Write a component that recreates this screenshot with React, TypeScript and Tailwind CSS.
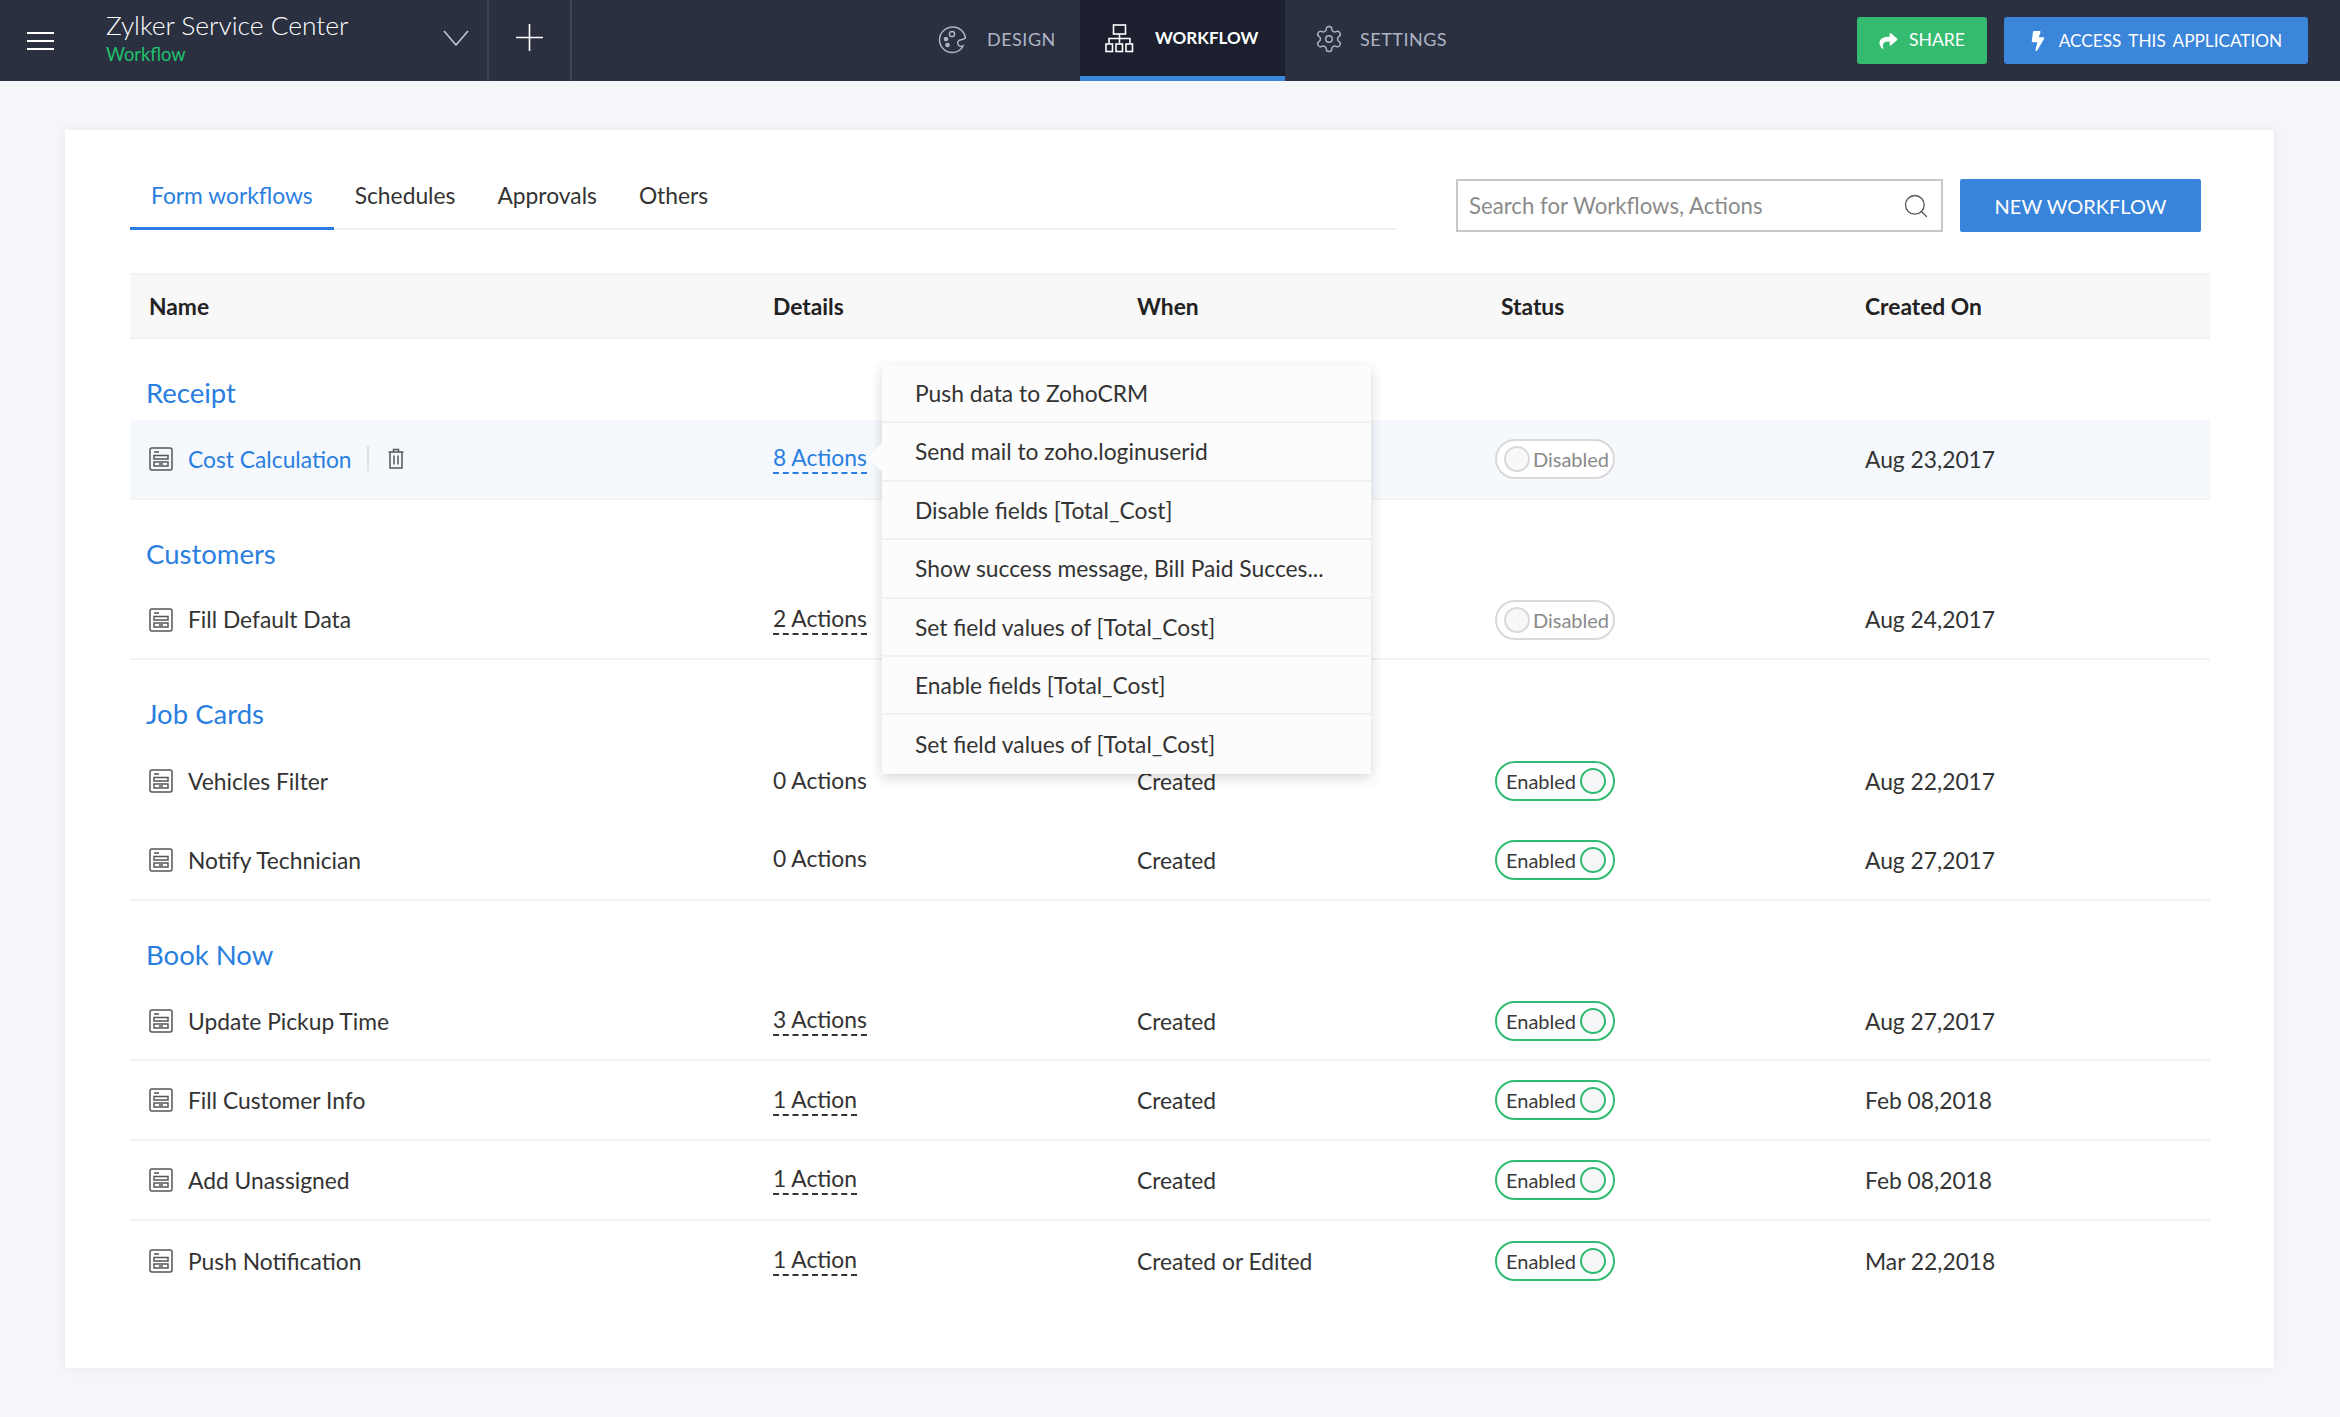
import { Search } from "lucide-react";
import { FaShare, FaBolt } from "react-icons/fa";

interface Row {
  name: string;
  actions: string;
  when: string;
  enabled: boolean;
  date: string;
  underlined?: boolean;
  active?: boolean;
}

const groups: { title: string; rows: Row[] }[] = [
  {
    title: "Receipt",
    rows: [
      { name: "Cost Calculation", actions: "8 Actions", when: "", enabled: false, date: "Aug 23,2017", underlined: true, active: true },
    ],
  },
  {
    title: "Customers",
    rows: [{ name: "Fill Default Data", actions: "2 Actions", when: "", enabled: false, date: "Aug 24,2017", underlined: true }],
  },
  {
    title: "Job Cards",
    rows: [
      { name: "Vehicles Filter", actions: "0 Actions", when: "Created", enabled: true, date: "Aug 22,2017" },
      { name: "Notify Technician", actions: "0 Actions", when: "Created", enabled: true, date: "Aug 27,2017" },
    ],
  },
  {
    title: "Book Now",
    rows: [
      { name: "Update Pickup Time", actions: "3 Actions", when: "Created", enabled: true, date: "Aug 27,2017", underlined: true },
      { name: "Fill Customer Info", actions: "1 Action", when: "Created", enabled: true, date: "Feb 08,2018", underlined: true },
      { name: "Add Unassigned", actions: "1 Action", when: "Created", enabled: true, date: "Feb 08,2018", underlined: true },
      { name: "Push Notification", actions: "1 Action", when: "Created or Edited", enabled: true, date: "Mar 22,2018", underlined: true },
    ],
  },
];

const popoverItems = [
  "Push data to ZohoCRM",
  "Send mail to zoho.loginuserid",
  "Disable fields [Total_Cost]",
  "Show success message, Bill Paid Succes...",
  "Set field values of [Total_Cost]",
  "Enable fields [Total_Cost]",
  "Set field values of [Total_Cost]",
];

function FormIcon() {
  return (
    <svg width="24" height="24" viewBox="0 0 24 24" fill="none" stroke="#555" strokeWidth="1.5" className="shrink-0">
      <rect x="1" y="1" width="22" height="22" rx="2" />
      <path d="M5 5h5" />
      <rect x="5" y="8.5" width="14" height="3.5" />
      <rect x="5" y="15" width="14" height="4" />
      <path d="M10 17h4" />
    </svg>
  );
}

function TrashIcon() {
  return (
    <svg width="16" height="21" viewBox="0 0 16 21" fill="none" stroke="#555" strokeWidth="1.5">
      <path d="M0.5 4h15M5.5 4V1.5h5V4" />
      <path d="M2 4v16h12V4" />
      <path d="M6 7.5v9M10 7.5v9" />
    </svg>
  );
}

function PaletteIcon() {
  return (
    <svg width="29" height="29" viewBox="0 0 29 29" fill="none" stroke="#aeb4c4" strokeWidth="1.5">
      <path d="M15 2C7.5 2 1.5 7.8 1.5 14.8 1.5 21.8 7.2 27.5 14 27.5c4.2 0 9-2.2 11-6.5-1.2.6-3.4.4-4.6-1-1.4-1.6-.6-3.6.6-4.6 1.8-1.4 5-.6 6.4-2.4C26.8 7 21.6 2 15 2Z" />
      <circle cx="14" cy="9" r="2.6" />
      <circle cx="8" cy="14" r="1.6" fill="#aeb4c4" />
      <circle cx="9.5" cy="20" r="1.6" fill="#aeb4c4" />
    </svg>
  );
}

function SitemapIcon() {
  return (
    <svg width="29" height="29" viewBox="0 0 29 29" fill="none" stroke="#fff" strokeWidth="1.6">
      <rect x="8.5" y="1" width="12" height="9" />
      <path d="M14.5 10v9M4 19v-4.5h21V19" />
      <rect x="1" y="20" width="6.5" height="7.5" />
      <rect x="11" y="20" width="6.5" height="7.5" />
      <rect x="21" y="20" width="6.5" height="7.5" />
    </svg>
  );
}

function GearIcon() {
  return (
    <svg width="30" height="30" viewBox="0 0 24 24" fill="none" stroke="#aeb4c4" strokeWidth="1.15" strokeLinejoin="round">
      <path d="M12.22 2h-.44a2 2 0 0 0-2 2v.18a2 2 0 0 1-1 1.73l-.43.25a2 2 0 0 1-2 0l-.15-.08a2 2 0 0 0-2.73.73l-.22.38a2 2 0 0 0 .73 2.73l.15.1a2 2 0 0 1 1 1.72v.51a2 2 0 0 1-1 1.74l-.15.09a2 2 0 0 0-.73 2.73l.22.38a2 2 0 0 0 2.73.73l.15-.08a2 2 0 0 1 2 0l.43.25a2 2 0 0 1 1 1.73V20a2 2 0 0 0 2 2h.44a2 2 0 0 0 2-2v-.18a2 2 0 0 1 1-1.73l.43-.25a2 2 0 0 1 2 0l.15.08a2 2 0 0 0 2.73-.73l.22-.39a2 2 0 0 0-.73-2.73l-.15-.08a2 2 0 0 1-1-1.74v-.5a2 2 0 0 1 1-1.74l.15-.09a2 2 0 0 0 .73-2.73l-.22-.38a2 2 0 0 0-2.73-.73l-.15.08a2 2 0 0 1-2 0l-.43-.25a2 2 0 0 1-1-1.73V4a2 2 0 0 0-2-2z" />
      <circle cx="12" cy="12" r="2.6" />
    </svg>
  );
}

function Toggle({ enabled }: { enabled: boolean }) {
  if (enabled) {
    return (
      <div className="-ml-[6px] flex h-[40px] w-[120px] items-center justify-between rounded-full border-2 border-[#2fbb72] pr-[7px] pl-[9px] text-[20px] text-[#3a3a3a]">
        <span>Enabled</span>
        <span className="h-[26px] w-[26px] rounded-full border-2 border-[#2fbb72] bg-[#f6f6f6]" />
      </div>
    );
  }
  return (
    <div className="-ml-[6px] flex h-[40px] w-[120px] items-center justify-between rounded-full border-2 border-[#d9d9d9] bg-white pr-[4px] pl-[7px] text-[20px] text-[#8a8a8a]">
      <span className="h-[26px] w-[26px] rounded-full border-2 border-[#d9d9d9] bg-[#f8f8f8]" />
      <span>Disabled</span>
    </div>
  );
}

function TableRow({ row, divider }: { row: Row; divider: boolean }) {
  return (
    <div
      className={`grid h-[79.7px] grid-cols-[643px_364px_364px_364px_1fr] items-center ${
        divider ? "border-b-2 border-[#f3f3f3]" : ""
      } ${row.active ? "bg-[#f5f9fe]" : ""}`}
    >
      <div className="flex items-center gap-[15px] pl-[19px]">
        <FormIcon />
        <span className={row.active ? "text-[#2a7ee0]" : ""}>{row.name}</span>
        {row.active && (
          <div className="flex items-center gap-[19px]">
            <span className="h-[25px] w-[2px] bg-[#dfe3e8]" />
            <TrashIcon />
          </div>
        )}
      </div>
      <div className="-mt-[3px]">
        <span
          className={
            row.underlined
              ? `border-b-2 border-dashed pb-[1px] ${row.active ? "border-[#2a7ee0] text-[#2a7ee0]" : "border-[#333]"}`
              : ""
          }
        >
          {row.actions}
        </span>
      </div>
      <div>{row.when}</div>
      <div>
        <Toggle enabled={row.enabled} />
      </div>
      <div>{row.date}</div>
    </div>
  );
}

export default function App() {
  return (
    <div className="h-[1417px] w-[2340px] overflow-hidden bg-[#f5f6fa] font-['Lato',sans-serif] text-[22.8px] text-[#333]">
      {/* Top bar */}
      <header className="flex h-[81px] items-stretch bg-[#2a3040] text-white">
        <div className="flex w-[106px] items-center pl-[27px]">
          <div className="flex w-[27px] flex-col gap-[6px]">
            <span className="h-[2px] bg-white" />
            <span className="h-[2px] bg-white" />
            <span className="h-[2px] bg-white" />
          </div>
        </div>
        <div className="flex w-[383px] items-center justify-between border-r-2 border-[#3d4454] pr-[18px] pb-[6px]">
          <div className="flex flex-col">
            <span className="text-[26.4px] leading-[32px] font-light">Zylker Service Center</span>
            <span className="text-[18.3px] leading-[26px] text-[#1fc26d]">Workflow</span>
          </div>
          <svg width="26" height="16" viewBox="0 0 26 16" fill="none" stroke="#c5c8d0" strokeWidth="1.6">
            <path d="M1 1l12 14L25 1" />
          </svg>
        </div>
        <div className="flex w-[83px] items-center justify-center border-r-2 border-[#3d4454] pb-[6px]">
          <svg width="27" height="27" viewBox="0 0 27 27" fill="none" stroke="#fff" strokeWidth="1.6">
            <path d="M13.5 0v27M0 13.5h27" />
          </svg>
        </div>
        <nav className="ml-[366px] flex items-stretch pb-0 text-[18px] tracking-[0.5px]">
          <div className="flex w-[142px] items-center gap-[20px] pb-[3px] text-[#aeb4c4]">
            <PaletteIcon />
            <span>DESIGN</span>
          </div>
          <div className="flex w-[205px] items-center gap-[21px] border-b-[5px] border-[#3a86dc] bg-[#1b1f2e] pl-[25px] text-[17px] font-bold tracking-normal">
            <SitemapIcon />
            <span>WORKFLOW</span>
          </div>
          <div className="ml-[29px] flex items-center gap-[16px] pb-[3px] text-[#aeb4c4]">
            <GearIcon />
            <span>SETTINGS</span>
          </div>
        </nav>
        <div className="mr-[32px] ml-auto flex items-center gap-[17px] text-[17.6px]">
          <button className="flex h-[47px] w-[130px] items-center justify-center gap-[11px] rounded-[3px] bg-[#35bb70]">
            <FaShare className="h-[18px] w-[19px]" />
            <span>SHARE</span>
          </button>
          <button className="flex h-[47px] w-[304px] items-center justify-center gap-[13px] rounded-[3px] bg-[#3b85da]">
            <FaBolt className="h-[20px] w-[16px]" />
            <span className="text-[17.2px] [word-spacing:3px]">ACCESS THIS APPLICATION</span>
          </button>
        </div>
      </header>

      {/* Card */}
      <main className="mt-[49px] mr-[66px] ml-[65px] h-[1238px] bg-white pt-[49px] pr-[64px] pl-[65px] shadow-[0_0_12px_rgba(0,0,0,0.05)]">
        <div className="flex items-start pr-[9px]">
          <div className="flex h-[51px] w-[1267px] items-stretch border-b-2 border-[#eeeff1]">
            <div className="-mb-[2px] border-b-[3px] border-[#2a7ee0] px-[21px] leading-[33px] text-[#2a7ee0]">Form workflows</div>
            <div className="px-[21px] leading-[33px]">Schedules</div>
            <div className="px-[21px] leading-[33px]">Approvals</div>
            <div className="px-[21px] leading-[33px]">Others</div>
          </div>
          <div className="ml-[59px] flex h-[53px] w-[487px] items-center justify-between border-2 border-[#c8c8cc] pr-[11px] pl-[11px] text-[22.2px] text-[#8b8b8b]">
            <span>Search for Workflows, Actions</span>
            <Search className="h-[28px] w-[28px] text-[#555]" strokeWidth={1.1} />
          </div>
          <button className="ml-[17px] h-[53px] w-[241px] rounded-[2px] bg-[#3984db] text-[20px] text-white">NEW WORKFLOW</button>
        </div>

        {/* Table */}
        <div className="relative mt-[41px]">
          <div className="grid h-[66px] grid-cols-[643px_364px_364px_364px_1fr] items-center border-y-2 border-[#f2f2f2] bg-[#f8f8f8] font-bold text-[#222]">
            <div className="pl-[19px]">Name</div>
            <div>Details</div>
            <div>When</div>
            <div>Status</div>
            <div>Created On</div>
          </div>

          {groups.map((group, g) => (
            <section key={group.title}>
              <div className="flex h-[81px] items-center pt-[26px] pl-[16px] text-[27.5px] text-[#2a7ee0]">{group.title}</div>
              {group.rows.map((row, i) => (
                <TableRow
                  key={row.name}
                  row={row}
                  divider={g < groups.length - 1 ? i === group.rows.length - 1 : i < group.rows.length - 1}
                />
              ))}
            </section>
          ))}

          {/* Actions popover */}
          <div className="absolute top-[92px] left-[752px] w-[489px] bg-[#fcfcfc] shadow-[0_4px_12px_rgba(0,0,0,0.16)]">
            <span className="absolute top-[82px] -left-[10px] h-[20px] w-[20px] rotate-45 bg-[#fcfcfc]" />
            {popoverItems.map((item, i) => (
              <div
                key={i}
                className={`relative flex h-[58.4px] items-center pl-[33px] whitespace-nowrap ${
                  i < popoverItems.length - 1 ? "border-b-2 border-[#f0f0f0]" : ""
                }`}
              >
                {item}
              </div>
            ))}
          </div>
        </div>
      </main>
    </div>
  );
}
